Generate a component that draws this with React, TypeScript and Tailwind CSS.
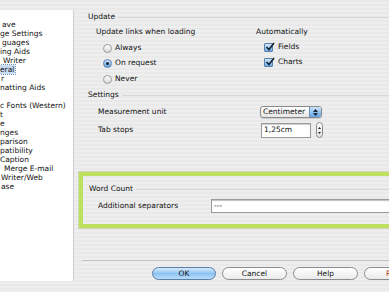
import React from "react";

const tree = [
  { label: "ave", pl: "pl-[2px]" },
  { label: "ge Settings", pl: "pl-0" },
  { label: "guages", pl: "pl-[2px]" },
  { label: "ing Aids", pl: "pl-0" },
  { label: "Writer", pl: "pl-[3px]" },
  { label: "eral", pl: "pl-0", selected: true },
  { label: "r", pl: "pl-[1px]" },
  { label: "natting Aids", pl: "pl-0" },
  { label: "", pl: "pl-0" },
  { label: "c Fonts (Western)", pl: "pl-0" },
  { label: "t", pl: "pl-0" },
  { label: "e", pl: "pl-0" },
  { label: "nges", pl: "pl-0" },
  { label: "parison", pl: "pl-0" },
  { label: "patibility", pl: "pl-0" },
  { label: "Caption", pl: "pl-0" },
  { label: "Merge E-mail", pl: "pl-[4px]" },
  { label: "Writer/Web", pl: "pl-[1px]" },
  { label: "ase", pl: "pl-[1px]" },
];

function Legend({ label }: { label: string }) {
  return (
    <div className="flex h-[10px] items-center">
      <span>{label}</span>
      <div className="ml-[3px] h-px flex-1 bg-[#d6d6d6]" />
    </div>
  );
}

function Radio({ label, checked }: { label: string; checked?: boolean }) {
  return (
    <div className="flex h-[10px] items-center">
      {checked ? (
        <span className="flex h-[9px] w-[9px] items-center justify-center rounded-full border border-[#5b7fa8] bg-gradient-to-b from-[#cfe6fb] to-[#5ea4e6]">
          <span className="h-[3px] w-[3px] rounded-full bg-[#16202c]" />
        </span>
      ) : (
        <span className="h-[9px] w-[9px] rounded-full border border-[#9a9a9a] bg-gradient-to-b from-white to-[#d9d9d9]" />
      )}
      <span className="ml-[3px]">{label}</span>
    </div>
  );
}

function Check({ label }: { label: string }) {
  return (
    <div className="flex h-[10px] items-center">
      <span className="relative h-[9px] w-[9px] rounded-[1px] border border-[#5b7fa8] bg-gradient-to-b from-[#d2e8fb] to-[#6aaae8]">
        <svg className="absolute -top-[2px] left-0" width="10" height="10" viewBox="0 0 10 10">
          <path d="M1.5 5 L4 7.5 L9 1" fill="none" stroke="#14202e" strokeWidth="1.6" />
        </svg>
      </span>
      <span className="ml-[5px]">{label}</span>
    </div>
  );
}

function Button({ label, primary, red }: { label: string; primary?: boolean; red?: boolean }) {
  return (
    <div
      className={
        primary
          ? "flex h-[13px] w-[64px] shrink-0 items-center justify-center rounded-full border border-[#5a7fa6] bg-gradient-to-b from-[#d6ebfc] via-[#8ec4f2] to-[#b9dcfa]"
          : "flex h-[13px] w-[65px] shrink-0 items-center justify-center rounded-full border border-[#8c8c8c] bg-gradient-to-b from-white to-[#ebebeb]"
      }
    >
      <span className={red ? "text-[#b5321e]" : ""}>{label}</span>
    </div>
  );
}

export default function App() {
  return (
    <div className="flex h-[292px] w-[389px] overflow-hidden bg-[repeating-linear-gradient(0deg,#eeeeee_0px,#eeeeee_2px,#e9e9e9_2px,#e9e9e9_4px)] font-['DejaVu_Sans',sans-serif] text-[7.5px] leading-[10px] text-[#111]">
      {/* options tree */}
      <div className="mt-[10px] h-[271px] w-[74px] shrink-0 overflow-hidden border-r border-[#cfcfcf] bg-white pt-[10px]">
        {tree.map((row, i) => (
          <div key={i} className={`flex h-[9px] items-center whitespace-nowrap leading-[9px] ${row.pl}`}>
            {row.selected ? (
              <span className="bg-[#c9dcf3] pr-[1px] outline outline-1 outline-dotted outline-[#6f8fb8]">{row.label}</span>
            ) : (
              row.label
            )}
          </div>
        ))}
      </div>

      {/* settings pane */}
      <div className="flex min-w-0 flex-1 flex-col">
        <div className="pl-[14px] pt-[12px]">
          <Legend label="Update" />
          <div className="mt-[5px] flex">
            <div className="w-[168px] shrink-0 pl-[8px]">
              <div className="h-[10px]">Update links when loading</div>
              <div className="ml-[7px] mt-[6px] flex flex-col gap-[5px]">
                <Radio label="Always" />
                <Radio label="On request" checked />
                <div className="mt-[1px]">
                  <Radio label="Never" />
                </div>
              </div>
            </div>
            <div>
              <div className="h-[10px]">Automatically</div>
              <div className="ml-[8px] mt-[5px] flex flex-col gap-[5px]">
                <Check label="Fields" />
                <Check label="Charts" />
              </div>
            </div>
          </div>

          <div className="mt-[6px]">
            <Legend label="Settings" />
          </div>
          <div className="mt-[6px] flex h-[12px] items-center pl-[10px]">
            <span className="w-[162px] shrink-0">Measurement unit</span>
            <div className="flex h-[12px] w-[62px] items-center overflow-hidden rounded-[3px] border border-[#8a8a8a] bg-gradient-to-b from-white to-[#e6e6e6] shadow-[0_1px_1px_rgba(0,0,0,0.15)]">
              <span className="flex-1 pl-[2px]">Centimeter</span>
              <span className="flex h-full w-[12px] flex-col items-center justify-center gap-[1px] border-l border-[#6d8fb5] bg-gradient-to-b from-[#cde5fb] to-[#5ea2e4]">
                <svg width="5" height="3" viewBox="0 0 5 3"><path d="M0 3 L2.5 0 L5 3Z" fill="#1b2533" /></svg>
                <svg width="5" height="3" viewBox="0 0 5 3"><path d="M0 0 L2.5 3 L5 0Z" fill="#1b2533" /></svg>
              </span>
            </div>
          </div>
          <div className="mt-[4px] flex h-[16px] items-center pl-[10px]">
            <span className="w-[163px] shrink-0">Tab stops</span>
            <div className="flex h-[15px] w-[50px] items-center border border-[#9a9a9a] bg-white pl-[2px] shadow-[inset_0_1px_1px_rgba(0,0,0,0.2)]">
              1,25cm
            </div>
            <div className="ml-[5px] flex h-[16px] w-[7px] flex-col items-center justify-center gap-[3px] rounded-full border border-[#8a8a8a] bg-gradient-to-b from-white to-[#e3e3e3]">
              <svg width="3" height="2" viewBox="0 0 3 2"><path d="M0 2 L1.5 0 L3 2Z" fill="#222" /></svg>
              <svg width="3" height="2" viewBox="0 0 3 2"><path d="M0 0 L1.5 2 L3 0Z" fill="#222" /></svg>
            </div>
          </div>
        </div>

        {/* word count */}
        <div className="ml-[5px] mt-[34px] h-[56px] border-[4px] border-r-0 border-[#bfdf5e] pl-[6px] pt-[8px] shadow-[0_0_0_1px_rgba(150,180,80,0.35)]">
          <Legend label="Word Count" />
          <div className="mt-[5px] flex h-[14px] items-center pl-[9px]">
            <span className="w-[113px] shrink-0">Additional separators</span>
            <div className="flex h-[14px] flex-1 items-center border border-[#9a9a9a] border-r-0 bg-white pl-[2px] shadow-[inset_0_1px_1px_rgba(0,0,0,0.25)]">
              ---
            </div>
          </div>
        </div>

        <div className="ml-[8px] mt-[32px] h-px bg-[#c4c4c4]" />
        <div className="ml-[78px] mt-[6px] flex gap-[6px]">
          <Button label="OK" primary />
          <Button label="Cancel" />
          <Button label="Help" />
          <Button label="Reset" red />
        </div>
      </div>
    </div>
  );
}
